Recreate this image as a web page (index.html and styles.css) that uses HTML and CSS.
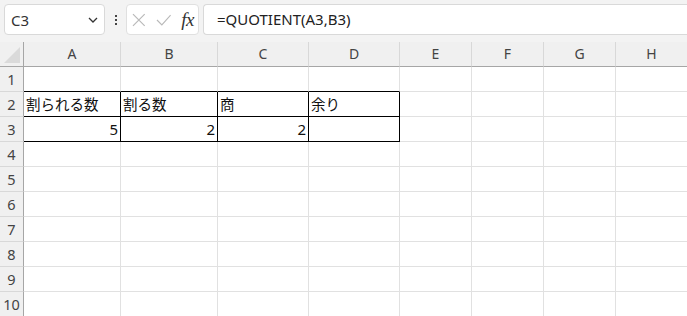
FILE: index.html
```html
<!DOCTYPE html>
<html lang="ja">
<head>
<meta charset="utf-8">
<link rel="stylesheet" href="styles.css">
</head>
<body>
<div class="toolbar">
  <div class="namebox">
    <span class="nameval">C3</span>
    <svg class="chev" width="10" height="6" viewBox="0 0 10 6"><path d="M1 1 L5 5 L9 1" fill="none" stroke="#333" stroke-width="1.3"/></svg>
  </div>
  <div class="dots"><i></i><i></i><i></i></div>
  <div class="btns">
    <svg class="ico" width="14" height="14" viewBox="0 0 14 14"><path d="M1 1 L13 13 M13 1 L1 13" stroke="#b9b9b9" stroke-width="1.2" fill="none"/></svg>
    <svg class="ico" width="16" height="12" viewBox="0 0 16 12"><path d="M1 6 L6 11 L15 1" stroke="#b9b9b9" stroke-width="1.2" fill="none"/></svg>
    <span class="fx">fx</span>
  </div>
  <div class="formula">=QUOTIENT(A3,B3)</div>
</div>
<div class="grid">
  <div class="corner"><span class="tri"></span></div>
  <div class="ch">A</div><div class="ch">B</div><div class="ch">C</div><div class="ch">D</div><div class="ch">E</div><div class="ch">F</div><div class="ch">G</div><div class="ch">H</div>

  <div class="rh">1</div>
  <div class="c bb"></div><div class="c bb"></div><div class="c bb"></div><div class="c bb"></div><div class="c"></div><div class="c"></div><div class="c"></div><div class="c"></div>

  <div class="rh">2</div>
  <div class="c t">割られる数</div><div class="c t">割る数</div><div class="c t">商</div><div class="c t">余り</div><div class="c"></div><div class="c"></div><div class="c"></div><div class="c"></div>

  <div class="rh">3</div>
  <div class="c t num">5</div><div class="c t num">2</div><div class="c t num">2</div><div class="c t"></div><div class="c"></div><div class="c"></div><div class="c"></div><div class="c"></div>

  <div class="rh">4</div>
  <div class="c"></div><div class="c"></div><div class="c"></div><div class="c"></div><div class="c"></div><div class="c"></div><div class="c"></div><div class="c"></div>
  <div class="rh">5</div>
  <div class="c"></div><div class="c"></div><div class="c"></div><div class="c"></div><div class="c"></div><div class="c"></div><div class="c"></div><div class="c"></div>
  <div class="rh">6</div>
  <div class="c"></div><div class="c"></div><div class="c"></div><div class="c"></div><div class="c"></div><div class="c"></div><div class="c"></div><div class="c"></div>
  <div class="rh">7</div>
  <div class="c"></div><div class="c"></div><div class="c"></div><div class="c"></div><div class="c"></div><div class="c"></div><div class="c"></div><div class="c"></div>
  <div class="rh">8</div>
  <div class="c"></div><div class="c"></div><div class="c"></div><div class="c"></div><div class="c"></div><div class="c"></div><div class="c"></div><div class="c"></div>
  <div class="rh">9</div>
  <div class="c"></div><div class="c"></div><div class="c"></div><div class="c"></div><div class="c"></div><div class="c"></div><div class="c"></div><div class="c"></div>
  <div class="rh">10</div>
  <div class="c"></div><div class="c"></div><div class="c"></div><div class="c"></div><div class="c"></div><div class="c"></div><div class="c"></div><div class="c"></div>
</div>
</body>
</html>
```
FILE: styles.css
```css
* { box-sizing: border-box; }
html, body { margin: 0; padding: 0; }
body {
  width: 687px;
  height: 316px;
  overflow: hidden;
  background: #ffffff;
  font-family: "Noto Sans", "Noto Sans CJK JP", sans-serif;
  color: #222;
}
.toolbar {
  height: 42px;
  background: #f3f3f3;
  display: flex;
  align-items: flex-start;
  padding: 4px 0 0 4px;
}
.namebox {
  width: 101px;
  height: 31px;
  background: #fff;
  border: 1px solid #d9d9d9;
  border-radius: 4px;
  display: flex;
  align-items: center;
  justify-content: space-between;
  padding: 0 6px 0 6px;
}
.nameval { font-size: 15px; color: #333; }
.chev { margin-top: 1px; }
.dots {
  width: 21px;
  height: 31px;
  display: flex;
  flex-direction: column;
  align-items: center;
  justify-content: center;
  gap: 2px;
}
.dots i {
  display: block;
  width: 2px;
  height: 2px;
  background: #444;
}
.btns {
  width: 73px;
  height: 31px;
  background: #fff;
  border: 1px solid #e0e0e0;
  border-radius: 4px;
  display: flex;
  align-items: center;
  padding: 0 4px 0 5px;
  gap: 10px;
}
.fx {
  font-family: "Liberation Serif", "DejaVu Serif", serif;
  font-style: italic;
  font-size: 19px;
  color: #333;
  letter-spacing: -0.5px;
}
.formula {
  margin-left: 4px;
  flex: 1;
  height: 31px;
  background: #fff;
  border: 1px solid #d9d9d9;
  border-right: none;
  border-radius: 4px 0 0 4px;
  font-size: 15px;
  line-height: 29px;
  padding-left: 13px;
  color: #222;
}
.grid {
  display: grid;
  grid-template-columns: 24px 97px 97px 91px 91px 72px 72px 72px 72px;
  grid-auto-rows: 25px;
}
.corner {
  background: #f0f0f0;
  border-right: 1px solid #a6a6a6;
  border-bottom: 1px solid #a6a6a6;
  position: relative;
}
.tri {
  position: absolute;
  right: 3px;
  bottom: 3px;
  width: 0;
  height: 0;
  border-left: 16px solid transparent;
  border-bottom: 16px solid #dadada;
}
.ch {
  background: #f0f0f0;
  border-right: 1px solid #d8d8d8;
  border-bottom: 1px solid #a6a6a6;
  font-size: 14px;
  color: #444;
  text-align: center;
  line-height: 24px;
}
.rh {
  background: #f0f0f0;
  border-right: 1px solid #a6a6a6;
  border-bottom: 1px solid #d8d8d8;
  font-size: 14.5px;
  color: #444;
  text-align: center;
  line-height: 24px;
}
.c {
  border-right: 1px solid #e1e1e1;
  border-bottom: 1px solid #e1e1e1;
}
.c.bb { border-bottom-color: #000; }
.c.t {
  border-right-color: #000;
  border-bottom-color: #000;
  font-family: "Noto Sans CJK JP", sans-serif;
  font-size: 14.5px;
  line-height: 24px;
  padding-left: 2px;
  color: #111;
  white-space: nowrap;
  overflow: hidden;
}
.c.num {
  text-align: right;
  padding-right: 2px;
  font-size: 15px;
  font-family: "Noto Sans", "Noto Sans CJK JP", sans-serif;
}
```
